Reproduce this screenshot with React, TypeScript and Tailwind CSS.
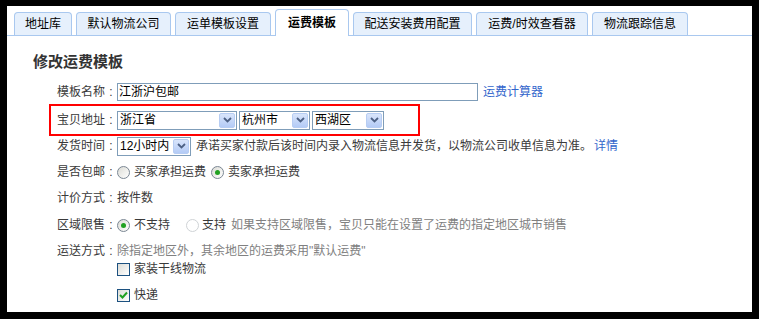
import React from "react";

const tabs = [
  { label: "地址库", w: "w-[58px]" },
  { label: "默认物流公司", w: "w-[95px]" },
  { label: "运单模板设置", w: "w-[96px]" },
  { label: "运费模板", w: "w-[74px]", active: true },
  { label: "配送安装费用配置", w: "w-[119px]" },
  { label: "运费/时效查看器", w: "w-[112px]" },
  { label: "物流跟踪信息", w: "w-[96px]" },
];

const Arrow = () => (
  <span className="ml-auto mr-px flex h-[15px] w-[16px] items-center justify-center rounded-[2px] border border-[#b7cdf3] bg-gradient-to-b from-[#d9e5fb] to-[#b4cbf6]">
    <svg width="9" height="6" viewBox="0 0 9 6">
      <path d="M1 1 L4.5 4.5 L8 1" fill="none" stroke="#4d6185" strokeWidth="1.8" />
    </svg>
  </span>
);

const Select = ({ value, w }: { value: string; w: string }) => (
  <div className={`flex h-[19px] ${w} items-center border border-[#7f9db9] bg-white pl-[2px] text-black`}>
    <span>{value}</span>
    <Arrow />
  </div>
);

const Radio = ({ checked, disabled }: { checked?: boolean; disabled?: boolean }) => (
  <span
    className={`flex h-[13px] w-[13px] items-center justify-center rounded-full border ${
      disabled ? "border-[#cfd3d6] bg-white" : "border-[#7b8794] bg-gradient-to-br from-[#dcdcd6] to-white"
    }`}
  >
    {checked && <span className="h-[5px] w-[5px] rounded-full bg-[#21a121]" />}
  </span>
);

const Checkbox = ({ checked }: { checked?: boolean }) => (
  <span className="flex h-[13px] w-[13px] items-center justify-center border border-[#1c5180] bg-gradient-to-br from-[#dcdcd6] to-white">
    {checked && (
      <svg width="9" height="8" viewBox="0 0 9 8">
        <path d="M1 4 L3.5 6.5 L8 1.5" fill="none" stroke="#21a121" strokeWidth="2" />
      </svg>
    )}
  </span>
);

// colon drawn centred in its cell, like the original page's font
const Label = ({ children }: { children: React.ReactNode }) => (
  <span className="flex w-[60px] shrink-0 text-[#3a3a3a]">
    {children}
    <span className="w-[12px] text-center">:</span>
  </span>
);

export default function App() {
  return (
    <div
      className="h-[319px] w-[759px] bg-black pb-[7px] pl-[7px] pr-[7px] pt-[6px] text-[12px] leading-[16px]"
      style={{ fontFamily: '"Liberation Sans", "Noto Sans CJK SC", sans-serif' }}
    >
      <div className="h-full w-full overflow-hidden bg-white">
        {/* tabs */}
        <div className="flex items-end gap-[4px] border-b border-[#a9c8ef] pl-[7px] pt-[3px]">
          {tabs.map((t) =>
            t.active ? (
              <div
                key={t.label}
                className={`-mb-px flex h-[27px] ${t.w} items-center justify-center rounded-t-[4px] border border-b-0 border-[#a9c8ef] bg-white font-bold text-black`}
              >
                {t.label}
              </div>
            ) : (
              <div
                key={t.label}
                className={`flex h-[23px] ${t.w} items-center justify-center rounded-t-[4px] border border-b-0 border-[#a9c8ef] bg-[#e6f0fc] text-black`}
              >
                {t.label}
              </div>
            )
          )}
        </div>

        <h2 className="ml-[26px] mt-[16px] text-[15px] font-bold leading-[20px] text-[#333]">修改运费模板</h2>

        <div className="ml-[42px] flex flex-col">
          <div className="mt-[10px] flex h-[20px] items-center pl-[8px]">
            <Label>模板名称</Label>
            <div className="flex h-[18px] w-[361px] items-center border border-[#7f9db9] pl-px text-black">江浙沪包邮</div>
            <a className="ml-[5px] text-[#3366cc]">运费计算器</a>
          </div>

          <div className="mt-[2px] flex h-[32px] w-[371px] items-center border-2 border-[#ff0000] pl-[6px]">
            <Label>宝贝地址</Label>
            <Select value="浙江省" w="w-[120px]" />
            <div className="ml-[2px]">
              <Select value="杭州市" w="w-[71px]" />
            </div>
            <div className="ml-[2px]">
              <Select value="西湖区" w="w-[72px]" />
            </div>
          </div>

          <div className="flex h-[20px] items-center pl-[8px]">
            <Label>发货时间</Label>
            <Select value="12小时内" w="w-[74px]" />
            <span className="ml-[5px] text-[#3a3a3a]">承诺买家付款后该时间内录入物流信息并发货，以物流公司收单信息为准。</span>
            <a className="ml-[2px] text-[#3366cc]">详情</a>
          </div>

          <div className="mt-[6px] flex h-[20px] items-center pl-[8px]">
            <Label>是否包邮</Label>
            <Radio />
            <span className="ml-[4px] text-[#3a3a3a]">买家承担运费</span>
            <span className="ml-[5px]">
              <Radio checked />
            </span>
            <span className="ml-[4px] text-[#3a3a3a]">卖家承担运费</span>
          </div>

          <div className="mt-[6px] flex h-[20px] items-center pl-[8px]">
            <Label>计价方式</Label>
            <span className="text-[#3a3a3a]">按件数</span>
          </div>

          <div className="mt-[7px] flex h-[20px] items-center pl-[8px]">
            <Label>区域限售</Label>
            <Radio checked />
            <span className="ml-[4px] text-[#3a3a3a]">不支持</span>
            <span className="ml-[16px]">
              <Radio disabled />
            </span>
            <span className="ml-[3px] text-[#3a3a3a]">支持</span>
            <span className="ml-[5px] text-[#808080]">如果支持区域限售，宝贝只能在设置了运费的指定地区城市销售</span>
          </div>

          <div className="mt-[7px] flex h-[18px] items-center pl-[8px]">
            <Label>运送方式</Label>
            <span className="text-[#808080]">除指定地区外，其余地区的运费采用"默认运费"</span>
          </div>

          <div className="flex h-[18px] items-center pl-[68px]">
            <Checkbox />
            <span className="ml-[4px] text-[#3a3a3a]">家装干线物流</span>
          </div>

          <div className="mt-[8px] flex h-[18px] items-center pl-[68px]">
            <Checkbox checked />
            <span className="ml-[4px] text-[#3a3a3a]">快递</span>
          </div>
        </div>
      </div>
    </div>
  );
}
